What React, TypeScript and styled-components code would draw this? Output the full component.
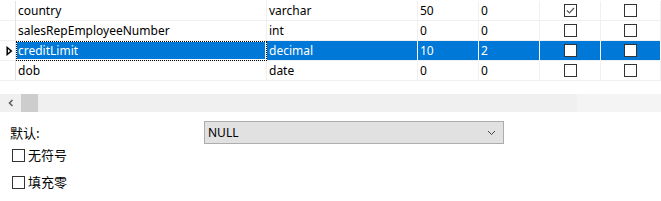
import React from 'react';
import styled, { createGlobalStyle, css } from 'styled-components';

const GlobalStyle = createGlobalStyle`
  html, body {
    margin: 0;
    padding: 0;
    background: #ffffff;
  }
  body {
    font-family: "Noto Sans", "Noto Sans CJK SC", sans-serif;
    font-size: 12px;
    color: #000;
  }
`;

interface Field {
  name: string;
  type: string;
  length: string;
  decimals: string;
  notNull: boolean;
  key: boolean;
}

const fields: Field[] = [
  { name: 'country', type: 'varchar', length: '50', decimals: '0', notNull: true, key: false },
  { name: 'salesRepEmployeeNumber', type: 'int', length: '0', decimals: '0', notNull: false, key: false },
  { name: 'creditLimit', type: 'decimal', length: '10', decimals: '2', notNull: false, key: false },
  { name: 'dob', type: 'date', length: '0', decimals: '0', notNull: false, key: false },
];

const SELECTED = 2;

const Page = styled.div`
  width: 661px;
  height: 201px;
  overflow: hidden;
  background: #fff;
`;

const Grid = styled.div`
  display: grid;
  grid-template-columns: 16px 251px 151px 61px 61px 61px 1fr;
  padding-top: 1px;
`;

const Cell = styled.div<{ $sel?: boolean; $focus?: boolean; $center?: boolean }>`
  height: 19px;
  display: flex;
  align-items: center;
  justify-content: ${(p) => (p.$center ? 'center' : 'flex-start')};
  padding-left: ${(p) => (p.$center ? '0' : '2px')};
  border-right: 1px solid ${(p) => (p.$sel ? '#ffffff' : '#f0f0f0')};
  border-bottom: 1px solid #f0f0f0;
  background: ${(p) => (p.$sel ? '#0078d7' : '#ffffff')};
  color: ${(p) => (p.$sel ? '#ffffff' : '#000000')};
  white-space: nowrap;
  overflow: hidden;
  line-height: 19px;
  ${(p) =>
    p.$focus &&
    css`
      box-shadow: inset 0 0 0 1px #ffffff;
      outline: 1px dotted #000000;
      outline-offset: -1px;
    `}
`;

const RowHeader = styled.div`
  height: 19px;
  display: flex;
  align-items: center;
  padding-left: 6px;
  border-right: 1px solid #e3e3e3;
  border-bottom: 1px solid #f0f0f0;
  background: #ffffff;
`;

const Box = styled.span`
  box-sizing: border-box;
  width: 13px;
  height: 13px;
  flex: none;
  border: 1px solid #333333;
  background: #ffffff;
  display: inline-flex;
  align-items: center;
  justify-content: center;
`;

const Spacer = styled.div`
  height: 13px;
`;

const ScrollBar = styled.div`
  height: 18px;
  display: flex;
  align-items: center;
  background: #f0f0f0;
`;

const ScrollArrow = styled.div`
  width: 21px;
  height: 18px;
  display: flex;
  align-items: center;
  justify-content: center;
`;

const Thumb = styled.div`
  width: 17px;
  height: 18px;
  background: #cdcdcd;
`;

const ScrollRest = styled.div`
  flex: 1;
`;

const ScrollCorner = styled.div`
  width: 84px;
  height: 18px;
  background: #f4f4f4;
`;

const Options = styled.div`
  padding: 9px 0 0 10px;
  font-family: "Noto Sans CJK SC", "Noto Sans", sans-serif;
  font-size: 13px;
`;

const DefaultRow = styled.div`
  display: flex;
  align-items: center;
  height: 23px;
`;

const Label = styled.div`
  width: 194px;
`;

const Select = styled.div`
  box-sizing: border-box;
  width: 300px;
  height: 23px;
  border: 1px solid #adadad;
  background: #e1e1e1;
  display: flex;
  align-items: center;
  justify-content: space-between;
  padding: 0 7px 0 3px;
  font-family: "Noto Sans", sans-serif;
  font-size: 12px;
`;

const CheckRow = styled.label<{ $top: number }>`
  display: flex;
  align-items: center;
  gap: 3px;
  height: 14px;
  margin-top: ${(p) => p.$top}px;
  padding-left: 2px;
  line-height: 14px;
`;

const Arrow = () => (
  <svg width="7" height="10" viewBox="0 0 7 10">
    <polygon points="1.2,1.5 5.3,5 1.2,8.5" fill="#ffffff" stroke="#000000" strokeWidth="1.5" />
  </svg>
);

const Check = () => (
  <svg width="11" height="11" viewBox="0 0 11 11">
    <polyline points="2,5.5 4.5,8 9,3" fill="none" stroke="#555555" strokeWidth="1.2" />
  </svg>
);

const Chevron = () => (
  <svg width="9" height="6" viewBox="0 0 9 6">
    <polyline points="1,1 4.5,4.5 8,1" fill="none" stroke="#444444" strokeWidth="1" />
  </svg>
);

const LeftArrow = () => (
  <svg width="6" height="8" viewBox="0 0 6 8">
    <polyline points="4.5,1 1.5,4 4.5,7" fill="none" stroke="#606060" strokeWidth="1.6" />
  </svg>
);

const App = () => {
  return (
    <Page>
      <GlobalStyle />
      <Grid>
        {fields.map((f, i) => {
          const sel = i === SELECTED;
          return (
            <React.Fragment key={f.name}>
              <RowHeader>{sel && <Arrow />}</RowHeader>
              <Cell $sel={sel} $focus={sel}>{f.name}</Cell>
              <Cell $sel={sel}>{f.type}</Cell>
              <Cell $sel={sel}>{f.length}</Cell>
              <Cell $sel={sel}>{f.decimals}</Cell>
              <Cell $sel={sel} $center>
                <Box>{f.notNull && <Check />}</Box>
              </Cell>
              <Cell $sel={sel} $center>
                <Box>{f.key && <Check />}</Box>
              </Cell>
            </React.Fragment>
          );
        })}
      </Grid>
      <Spacer />
      <ScrollBar>
        <ScrollArrow>
          <LeftArrow />
        </ScrollArrow>
        <Thumb />
        <ScrollRest />
        <ScrollCorner />
      </ScrollBar>
      <Options>
        <DefaultRow>
          <Label>默认:</Label>
          <Select>
            <span>NULL</span>
            <Chevron />
          </Select>
        </DefaultRow>
        <CheckRow $top={4}>
          <Box />
          <span>无符号</span>
        </CheckRow>
        <CheckRow $top={13}>
          <Box />
          <span>填充零</span>
        </CheckRow>
      </Options>
    </Page>
  );
};

export default App;
